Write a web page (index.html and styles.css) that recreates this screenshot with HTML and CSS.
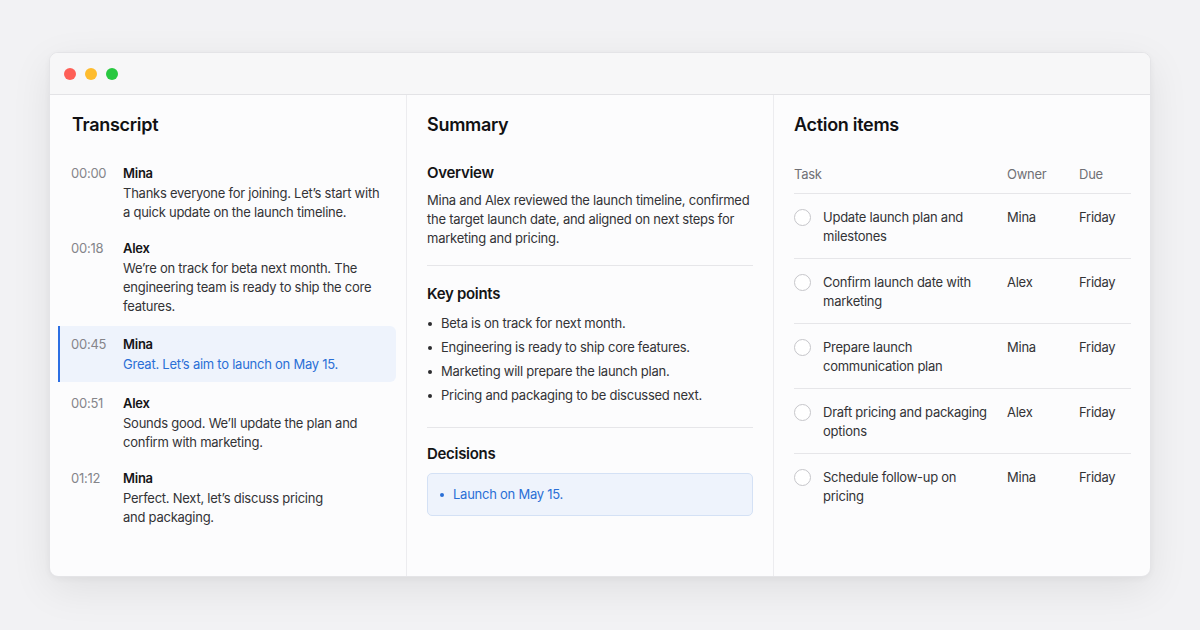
FILE: index.html
```html
<!DOCTYPE html>
<html lang="en">
  <head>
    <meta charset="UTF-8" />
    <meta name="viewport" content="width=device-width, initial-scale=1.0" />
    <title>Meeting notes</title>
    <link rel="stylesheet" href="styles.css">
  </head>
  <body>
    <div class="window">
      <div class="titlebar">
        <span class="dot red"></span>
        <span class="dot yellow"></span>
        <span class="dot green"></span>
      </div>
      <div class="panes">
        <div class="pane transcript">
          <h2>Transcript</h2>
          <div class="entries">
            <div class="entry">
              <span class="time">00:00</span>
              <div class="body">
                <div class="speaker">Mina</div>
                <p>Thanks everyone for joining. Let’s start with a quick update on the launch timeline.</p>
              </div>
            </div>
            <div class="entry">
              <span class="time">00:18</span>
              <div class="body">
                <div class="speaker">Alex</div>
                <p>We’re on track for beta next month. The engineering team is ready to ship the core features.</p>
              </div>
            </div>
            <div class="entry active">
              <span class="time">00:45</span>
              <div class="body">
                <div class="speaker">Mina</div>
                <p>Great. Let’s aim to launch on May 15.</p>
              </div>
            </div>
            <div class="entry">
              <span class="time">00:51</span>
              <div class="body">
                <div class="speaker">Alex</div>
                <p>Sounds good. We’ll update the plan and confirm with marketing.</p>
              </div>
            </div>
            <div class="entry">
              <span class="time">01:12</span>
              <div class="body">
                <div class="speaker">Mina</div>
                <p>Perfect. Next, let’s discuss pricing<br>and packaging.</p>
              </div>
            </div>
          </div>
        </div>

        <div class="pane summary">
          <h2>Summary</h2>
          <div class="section overview">
            <h3>Overview</h3>
            <p>Mina and Alex reviewed the launch timeline, confirmed the target launch date, and aligned on next steps for marketing and pricing.</p>
          </div>
          <div class="section keypoints">
            <h3>Key points</h3>
            <ul>
              <li>Beta is on track for next month.</li>
              <li>Engineering is ready to ship core features.</li>
              <li>Marketing will prepare the launch plan.</li>
              <li>Pricing and packaging to be discussed next.</li>
            </ul>
          </div>
          <div class="section decisions">
            <h3>Decisions</h3>
            <div class="decision-box">
              <ul>
                <li>Launch on May 15.</li>
              </ul>
            </div>
          </div>
        </div>

        <div class="pane actions">
          <h2>Action items</h2>
          <table>
            <thead>
              <tr>
                <th class="task">Task</th>
                <th class="owner">Owner</th>
                <th class="due">Due</th>
              </tr>
            </thead>
            <tbody>
              <tr>
                <td><div class="task-cell"><span class="check"></span><span>Update launch plan and milestones</span></div></td>
                <td>Mina</td>
                <td>Friday</td>
              </tr>
              <tr>
                <td><div class="task-cell"><span class="check"></span><span>Confirm launch date with marketing</span></div></td>
                <td>Alex</td>
                <td>Friday</td>
              </tr>
              <tr>
                <td><div class="task-cell"><span class="check"></span><span>Prepare launch communication plan</span></div></td>
                <td>Mina</td>
                <td>Friday</td>
              </tr>
              <tr>
                <td><div class="task-cell"><span class="check"></span><span>Draft pricing and packaging options</span></div></td>
                <td>Alex</td>
                <td>Friday</td>
              </tr>
              <tr>
                <td><div class="task-cell"><span class="check"></span><span>Schedule follow-up on pricing</span></div></td>
                <td>Mina</td>
                <td>Friday</td>
              </tr>
            </tbody>
          </table>
        </div>
      </div>
    </div>
  </body>
</html>
```

FILE: styles.css
```css
body {
  font-family: Inter, "Noto Sans", sans-serif;
  background-color: #f2f2f4;
  margin: 0;
  padding: 52px 49px;
  color: #333336;
  letter-spacing: -0.25px;
}

.window {
  width: 1102px;
  height: 525px;
  background-color: #fcfcfd;
  border: 1px solid #e4e4e7;
  border-radius: 9px;
  box-sizing: border-box;
  box-shadow: 0 12px 40px rgba(0, 0, 0, 0.08), 0 2px 6px rgba(0, 0, 0, 0.04);
  display: flex;
  flex-direction: column;
  overflow: hidden;
}

.titlebar {
  height: 41px;
  background-color: #f7f7f8;
  border-bottom: 1px solid #e3e3e6;
  display: flex;
  align-items: center;
  gap: 9px;
  padding-left: 14px;
  flex-shrink: 0;
}

.dot {
  width: 12px;
  height: 12px;
  border-radius: 50%;
}

.red { background-color: #fe5f57; }
.yellow { background-color: #febc2e; }
.green { background-color: #28c840; }

.panes {
  flex: 1;
  display: grid;
  grid-template-columns: 357px 367px 1fr;
}

.pane {
  padding: 17px 20px 0 20px;
  border-right: 1px solid #ececef;
}

.pane.transcript {
  padding-left: 22px;
}

.pane:last-child {
  border-right: none;
  padding-right: 19px;
}

h2 {
  font-size: 18px;
  font-weight: 600;
  line-height: 26px;
  color: #111113;
  margin: 0;
  letter-spacing: -0.3px;
}

h3 {
  font-size: 15px;
  font-weight: 600;
  line-height: 20px;
  color: #141416;
  margin: 0;
  letter-spacing: -0.3px;
}

p {
  margin: 0;
}

/* transcript */

.entries {
  margin: 17px -10px 0 -14px;
}

.entry {
  display: flex;
  padding: 8px 12px 8px 11px;
  border-left: 2px solid transparent;
  border-radius: 6px;
  font-size: 13px;
  line-height: 19px;
}

.entry.active {
  background-color: #eef3fc;
  border-left-color: #2c6fe3;
  border-radius: 0 6px 6px 0;
  margin: 2px 0 3px;
}

.time {
  width: 52px;
  flex-shrink: 0;
  color: #85858a;
  line-height: 20px;
}

.speaker {
  font-weight: 600;
  color: #141416;
  line-height: 20px;
  margin-bottom: 1px;
}

.entry p {
  color: #333336;
}

.entry.active p {
  color: #2a6fd6;
}

/* summary */

.section {
  border-bottom: 1px solid #e6e6e9;
}

.section:last-child {
  border-bottom: none;
}

.overview {
  padding: 25px 0 17px;
}

.overview p {
  margin-top: 8px;
  font-size: 13px;
  line-height: 19px;
  color: #333336;
}

.keypoints {
  padding: 18px 0 22px;
}

ul {
  list-style: none;
  margin: 0;
  padding: 0;
}

li {
  position: relative;
  font-size: 13px;
  line-height: 19px;
  color: #333336;
  padding-left: 14px;
}

li::before {
  content: "";
  position: absolute;
  left: 1px;
  top: 8px;
  width: 4px;
  height: 4px;
  border-radius: 50%;
  background-color: #2c2c2f;
}

.keypoints ul {
  margin-top: 10px;
}

.keypoints li + li {
  margin-top: 5px;
}

.decisions {
  padding-top: 16px;
}

.decision-box {
  margin-top: 9px;
  background-color: #eef3fc;
  border: 1px solid #d4e1f5;
  border-radius: 5px;
  padding: 11px 12px;
}

.decision-box li {
  color: #2a6fd6;
  padding-left: 13px;
}

.decision-box li::before {
  background-color: #2a6fd6;
  left: 0;
}

/* action items */

table {
  width: 100%;
  border-collapse: collapse;
  margin-top: 27px;
  font-size: 13px;
  line-height: 19px;
}

th {
  text-align: left;
  font-weight: 400;
  color: #707075;
  padding: 0 0 9px;
  border-bottom: 1px solid #e6e6e9;
}

th.task { width: 213px; }
th.owner { width: 72px; }

td {
  vertical-align: top;
  padding: 14px 0 12px;
  border-bottom: 1px solid #e6e6e9;
  color: #333336;
}

tbody tr:last-child td {
  border-bottom: none;
}

.task-cell {
  display: flex;
  gap: 12px;
  padding-right: 12px;
}

.check {
  width: 15px;
  height: 15px;
  flex-shrink: 0;
  border: 1.3px solid #c6c6ca;
  border-radius: 50%;
  margin-top: 1px;
  background-color: #fff;
}
```
